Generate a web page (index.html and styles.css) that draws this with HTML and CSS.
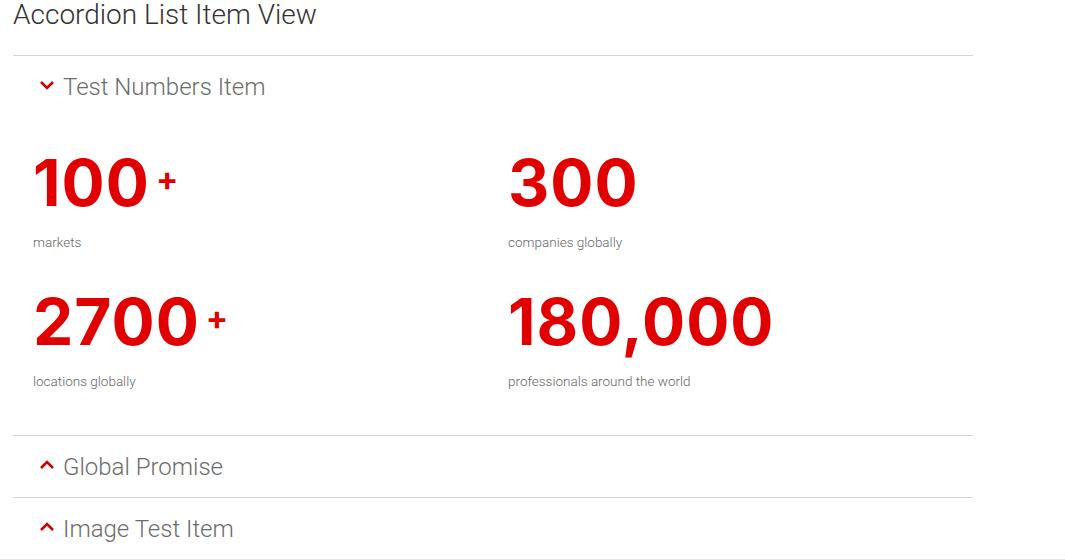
FILE: index.html
```html
<!DOCTYPE html>
<html lang="en">
<head>
<meta charset="utf-8">
<title>Accordion List Item View</title>
<link rel="stylesheet" href="styles.css">
</head>
<body>
<div class="page">
  <h1 class="title">Accordion List Item View</h1>
  <div class="accordion">
    <div class="item open">
      <div class="header">
        <svg class="chev" viewBox="0 0 16 10" width="16" height="10"><path d="M2 2 L8 8 L14 2" /></svg>
        <span class="label">Test Numbers Item</span>
      </div>
      <div class="content">
        <div class="stat">
          <div class="num">100<span class="plus">+</span></div>
          <div class="desc">markets</div>
        </div>
        <div class="stat">
          <div class="num">300</div>
          <div class="desc">companies globally</div>
        </div>
        <div class="stat">
          <div class="num">2700<span class="plus">+</span></div>
          <div class="desc">locations globally</div>
        </div>
        <div class="stat">
          <div class="num">180,000</div>
          <div class="desc">professionals around the world</div>
        </div>
      </div>
    </div>
    <div class="item">
      <div class="header">
        <svg class="chev" viewBox="0 0 16 10" width="16" height="10"><path d="M2 8 L8 2 L14 8" /></svg>
        <span class="label">Global Promise</span>
      </div>
    </div>
    <div class="item">
      <div class="header">
        <svg class="chev" viewBox="0 0 16 10" width="16" height="10"><path d="M2 8 L8 2 L14 8" /></svg>
        <span class="label">Image Test Item</span>
      </div>
    </div>
  </div>
</div>
<div class="footer-line"></div>
</body>
</html>
```
FILE: styles.css
```css
html, body {
  margin: 0;
  padding: 0;
  background: #fff;
}
body {
  font-family: Roboto, "Liberation Sans", sans-serif;
  color: #333;
}
.page {
  padding-left: 13px;
  width: 960px;
}
.title {
  margin: 0 0 25px 0;
  font-size: 28px;
  line-height: 30px;
  font-weight: 300;
  color: #333;
}
.item {
  border-top: 1px solid #d6d6d6;
}
.header {
  height: 61px;
  display: flex;
  align-items: center;
  padding-left: 26px;
  gap: 8px;
}
.chev {
  display: block;
  fill: none;
  stroke: #cc0000;
  stroke-width: 2.6;
  margin-top: -3px;
}
.label {
  font-size: 24px;
  font-weight: 300;
  color: #6b6b6b;
}
.content {
  display: grid;
  grid-template-columns: 475px 1fr;
  row-gap: 40px;
  padding: 34px 0 46px 20px;
}
.num {
  font-family: Inter, "Liberation Sans", sans-serif;
  font-size: 64px;
  line-height: 64px;
  font-weight: 700;
  color: #e00000;
  letter-spacing: 1px;
  display: flex;
  align-items: flex-start;
}
.plus {
  font-size: 33px;
  line-height: 28px;
  margin-top: 14px;
  margin-left: 6px;
}
.desc {
  margin-top: 19px;
  font-size: 13.5px;
  line-height: 16px;
  font-weight: 300;
  color: #666;
}
.footer-line {
  border-top: 1px solid #e6e6e6;
}
```
